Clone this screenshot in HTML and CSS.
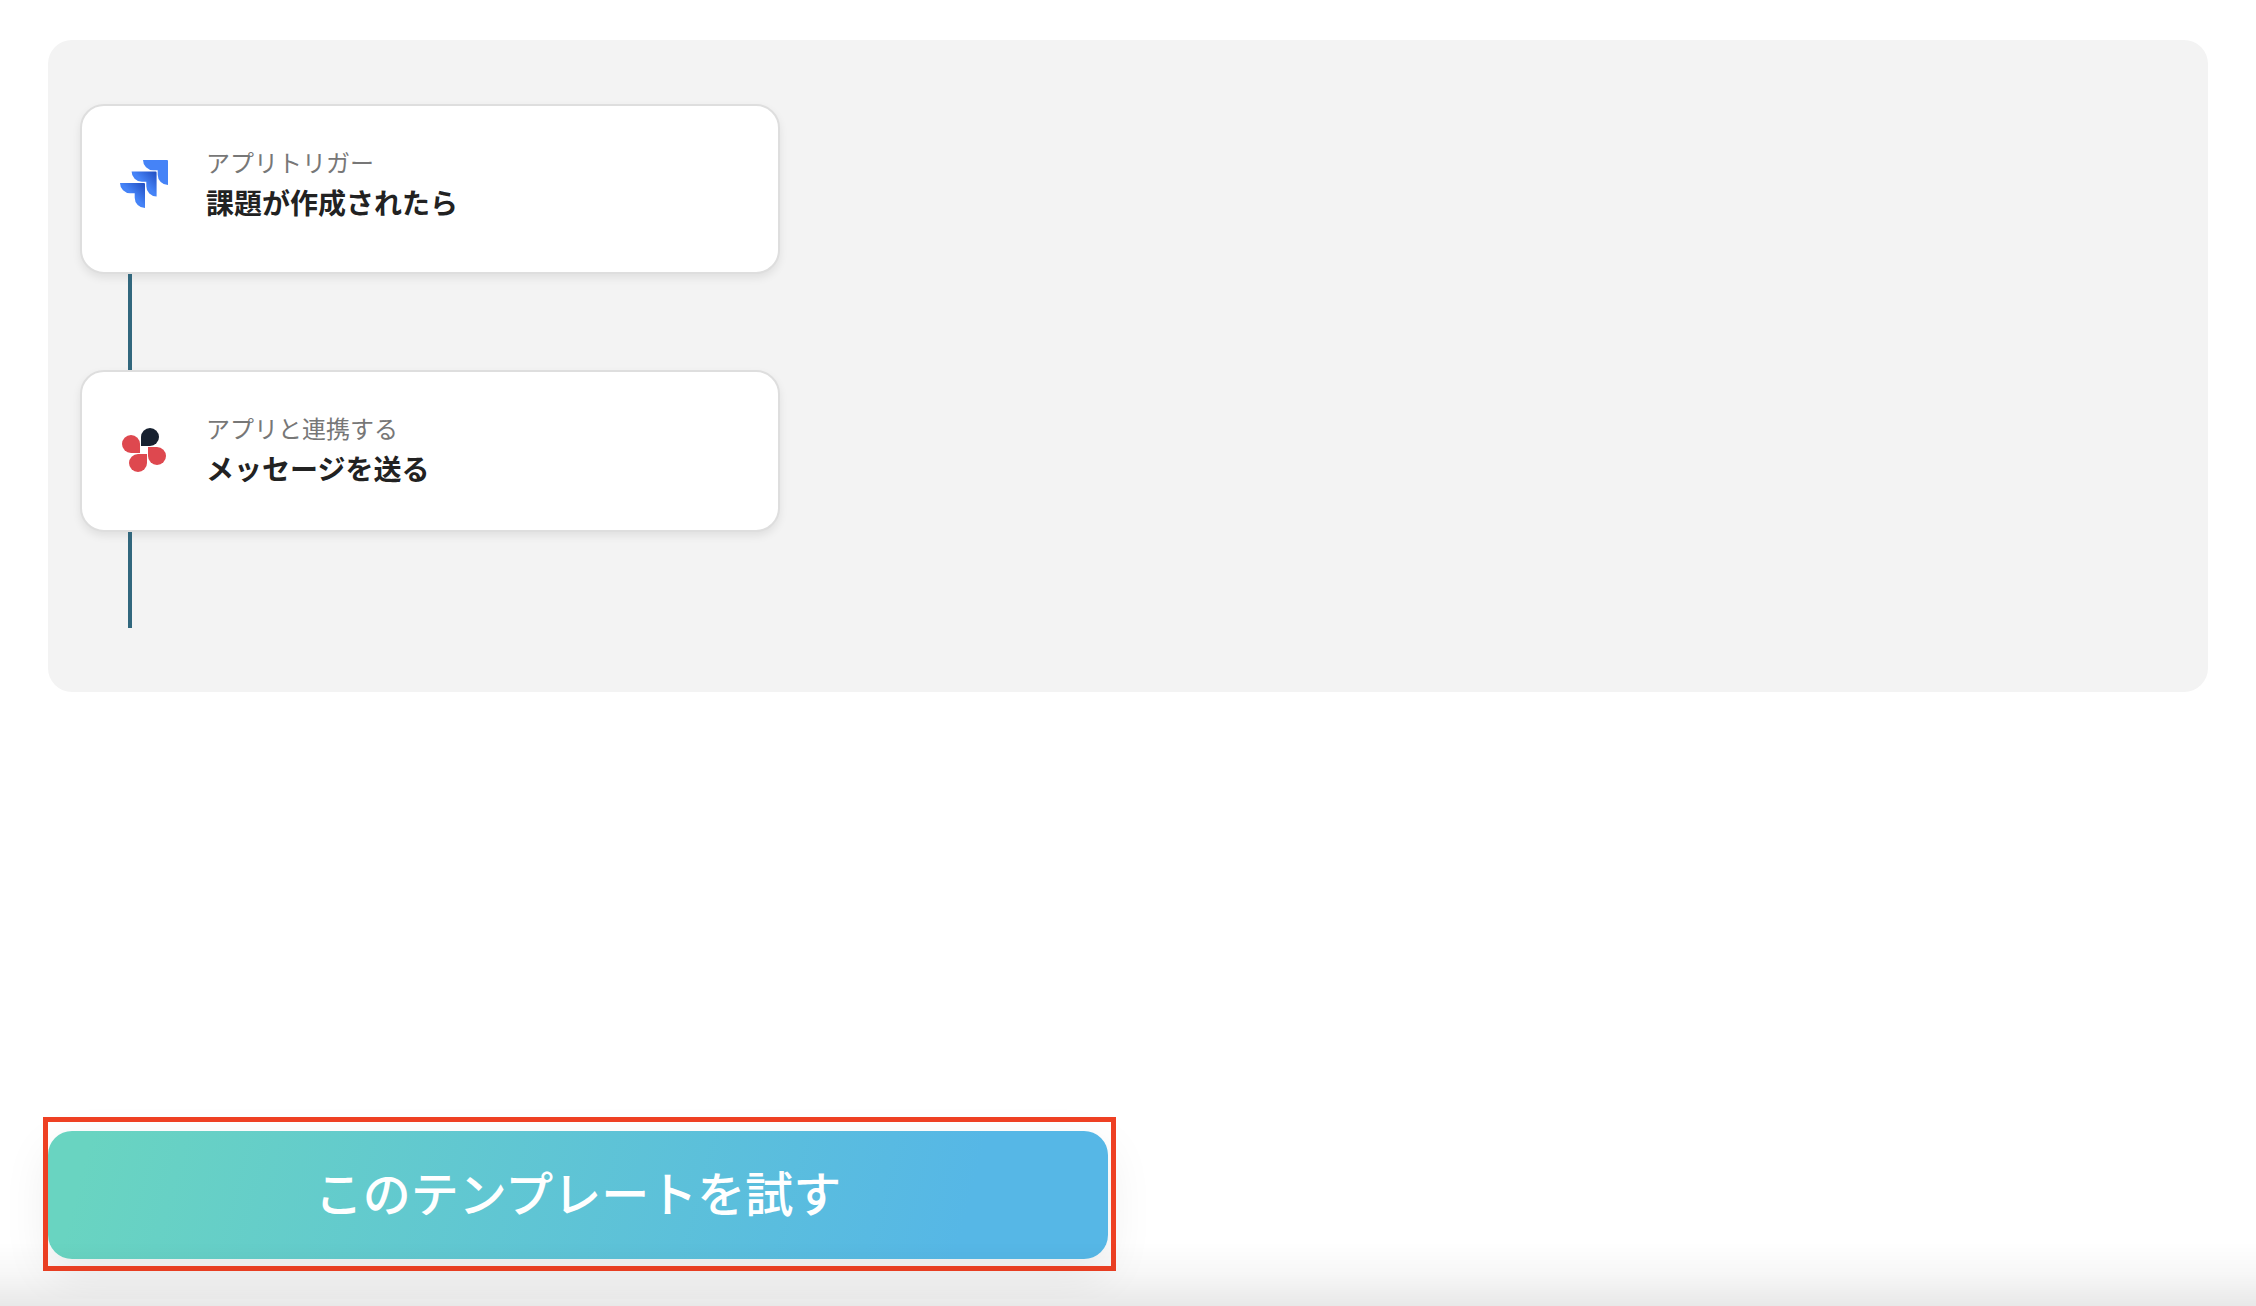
FILE: index.html
```html
<!DOCTYPE html>
<html lang="ja">
<head>
  <meta charset="utf-8">
  <meta name="viewport" content="width=device-width, initial-scale=1">
  <title>テンプレート</title>
  <link rel="stylesheet" href="styles.css">
</head>
<body>
  <main class="page">
    <ol class="flow">
      <li class="step">
        <article class="card card-trigger">
          <svg class="card-icon" viewBox="0 0 48 48" aria-hidden="true">
            <defs>
              <linearGradient id="fold" x1="1" y1="0" x2="0.4" y2="0.6">
                <stop offset="0.1" stop-color="#2453c6"/>
                <stop offset="0.8" stop-color="#4583f7"/>
              </linearGradient>
            </defs>
            <path fill="#4583f7" d="M23 0H47Q48 0 48 1V25A10.3 10.3 0 0 1 37.7 14.7V10.3H33.3A10.3 10.3 0 0 1 23 0Z"/>
            <path fill="url(#fold)" d="M11.6 11.5H35.6Q36.6 11.5 36.6 12.5V36.5A10.3 10.3 0 0 1 26.3 26.2V21.8H21.9A10.3 10.3 0 0 1 11.6 11.5Z"/>
            <path fill="url(#fold)" d="M0 23H24Q25 23 25 24V48A10.3 10.3 0 0 1 14.7 37.7V33.3H10.3A10.3 10.3 0 0 1 0 23Z"/>
          </svg>
          <div class="card-text">
            <p class="card-label">アプリトリガー</p>
            <h2 class="card-title">課題が作成されたら</h2>
          </div>
        </article>
      </li>
      <li class="step">
        <article class="card">
          <svg class="card-icon" viewBox="0 0 48 48" aria-hidden="true">
            <path fill="#172130" d="M21 20V11A9 9 0 1 1 30 20Z"/>
            <path fill="#de484f" d="M20 27H11A9 9 0 1 1 20 18Z"/>
            <path fill="#de484f" d="M28 21H37A9 9 0 1 1 28 30Z"/>
            <path fill="#de484f" d="M27 28V37A9 9 0 1 1 18 28Z"/>
          </svg>
          <div class="card-text">
            <p class="card-label">アプリと連携する</p>
            <h2 class="card-title">メッセージを送る</h2>
          </div>
        </article>
      </li>
    </ol>
    <div class="actions">
      <div class="highlight">
        <button class="try-button" type="button">このテンプレートを試す</button>
      </div>
    </div>
  </main>
  <div class="edge-shade"></div>
</body>
</html>
```
FILE: styles.css
```css
* {
  box-sizing: border-box;
}

body {
  margin: 0;
  background: #fff;
  color: #222;
  font-family: "Noto Sans CJK JP", sans-serif;
}

.page {
  padding: 40px 48px;
}

.flow {
  margin: 0;
  padding: 64px 32px;
  list-style: none;
  background: #f3f3f3;
  border-radius: 24px;
}

/* Vertical connector under each card */
.step::after {
  content: "";
  display: block;
  width: 4px;
  height: 96px;
  margin-left: 48px;
  background: #31677d;
  position: relative;
}

.card {
  display: flex;
  align-items: center;
  gap: 38px;
  max-width: 700px;
  padding: 36px 38px 38px;
  background: #fff;
  border: 2px solid #dedede;
  border-radius: 24px;
  box-shadow: 0 4px 8px rgba(0, 0, 0, 0.08);
}

.card-trigger {
  padding-bottom: 46px;
}

.card-icon {
  flex: none;
  width: 48px;
  height: 48px;
}

.card-text {
  padding-bottom: 4px;
}

.card-label,
.card-title {
  margin: 0;
  line-height: 40px;
}

.card-label {
  color: #777;
  font-size: 24px;
  font-weight: 400;
}

.card-title {
  font-size: 28px;
  font-weight: 700;
}

.actions {
  display: grid;
  grid-template-columns: 1fr 1fr;
  gap: 40px;
  margin-top: 439px;
}

.highlight {
  position: relative;
}

/* Marker frame drawn over the button */
.highlight::after {
  content: "";
  position: absolute;
  inset: -14px -8px -12px -5px;
  border: 5px solid #ee4023;
  pointer-events: none;
}

.try-button {
  display: block;
  width: 100%;
  height: 128px;
  padding: 0 0 8px;
  border: 0;
  border-radius: 24px;
  background: linear-gradient(105deg, #69d4c1 4%, #56b7e6 86%);
  box-shadow: 0 16px 48px rgba(0, 0, 0, 0.08);
  color: #fff;
  font-family: inherit;
  font-size: 48px;
  font-weight: 500;
  cursor: pointer;
}

/* Soft shade along the bottom edge of the window */
.edge-shade {
  position: fixed;
  inset: auto 0 0;
  height: 64px;
  background: linear-gradient(rgba(0, 0, 0, 0), rgba(0, 0, 0, 0.03) 50%, rgba(0, 0, 0, 0.09));
  pointer-events: none;
}
```
